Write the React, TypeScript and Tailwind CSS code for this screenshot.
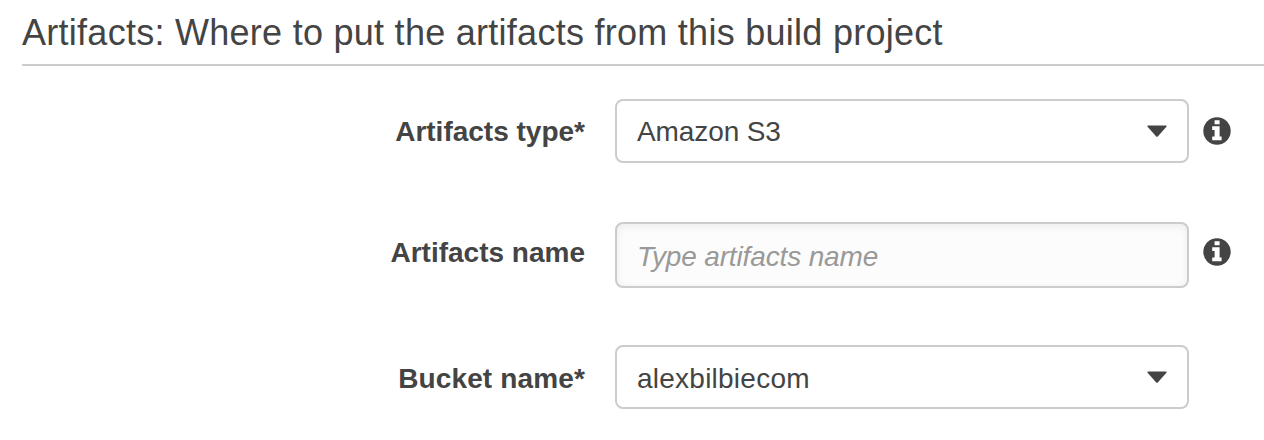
import React from "react";

function Info() {
  return (
    <svg className="h-7 w-7" viewBox="0 0 28 28" aria-label="More information">
      <circle cx="14" cy="14" r="13.7" fill="#444" />
      <path d="M11.6 3.2h5v4h-5z M9.2 9.2h7.4v10.2h2v3.8H9.2v-3.8h2.4v-6.4H9.2z" fill="#fff" />
    </svg>
  );
}

function Select({ children }: { children: React.ReactNode }) {
  return (
    <button className="flex h-16 w-[574px] items-center justify-between rounded-[8px] border-2 border-[#ccc] bg-white px-5 text-[28px] leading-[32px]">
      {children}
      <svg className="mb-px h-3 w-5" viewBox="0 0 20 12">
        <path d="M1 .5h18q1 .5.4 1.2L10.8 11.4q-.8.9-1.6 0L.6 1.7Q0 1 1 .5z" fill="#444" />
      </svg>
    </button>
  );
}

function Label({ children }: { children: React.ReactNode }) {
  return <label className="w-[585px] text-right text-[28px] leading-[32px] font-bold">{children}</label>;
}

export default function App() {
  return (
    <main className="h-[440px] w-[1264px] overflow-hidden bg-white font-['Liberation_Sans',sans-serif] text-[#444]">
      <h1 className="ml-[22px] h-[66px] border-b-2 border-[#ccc] pt-[12px] text-[36px] leading-[42px] tracking-[0.27px] whitespace-nowrap">
        Artifacts: Where to put the artifacts from this build project
      </h1>
      <div className="mt-[33px] flex h-16 items-center">
        <div className="flex pt-[2px]"><Label>Artifacts type*</Label></div>
        <div className="ml-[30px]"><Select><span className="pt-[2px] tracking-[-0.1px]">Amazon S3</span></Select></div>
        <div className="ml-[14px]"><Info /></div>
      </div>
      <div className="mt-[59px] flex h-[66px] items-center">
        <div className="flex pb-[4px]"><Label>Artifacts name</Label></div>
        <input
          className="ml-[30px] h-[66px] w-[574px] rounded-[8px] border-2 border-[#ccc] bg-[#fcfcfc] px-5 pt-[4px] text-[28px] tracking-[-0.14px] italic shadow-[inset_0_2px_8px_rgba(0,0,0,0.07)] outline-none placeholder:text-[#999]"
          placeholder="Type artifacts name"
        />
        <div className="ml-[14px] pb-[6px]"><Info /></div>
      </div>
      <div className="mt-[57px] flex h-16 items-center">
        <div className="flex pt-[4px] tracking-[0.14px]"><Label>Bucket name*</Label></div>
        <div className="ml-[30px]"><Select><span className="pt-[4px] tracking-[0.24px]">alexbilbiecom</span></Select></div>
      </div>
    </main>
  );
}
